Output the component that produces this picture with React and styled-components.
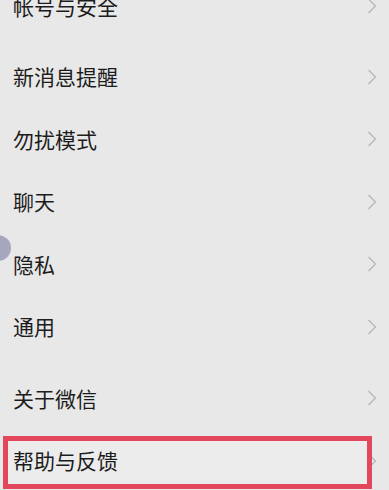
import React from "react";
import styled, { createGlobalStyle } from "styled-components";

const Global = createGlobalStyle`
  html, body { margin: 0; padding: 0; background: #e8e8e8; }
  body { width: 389px; height: 490px; overflow: hidden; }
`;

const Page = styled.div`
  position: relative;
  width: 389px;
  height: 490px;
  overflow: hidden;
  background: #e8e8e8;
  font-family: "Noto Sans CJK SC", "Noto Sans", sans-serif;
`;

const List = styled.div`
  display: flex;
  flex-direction: column;
  margin-top: -25px;
`;

const Group = styled.div`
  display: flex;
  flex-direction: column;
  margin-bottom: ${(p) => p.$gap || 0}px;
`;

const Row = styled.div`
  position: relative;
  height: 62.5px;
  display: flex;
  align-items: center;
  justify-content: space-between;
  padding: 0 12px 0 13px;
`;

const Label = styled.span`
  position: relative;
  z-index: 1;
  font-size: 21px;
  color: #1c1c1c;
  line-height: 1;
`;

const Chevron = styled.svg`
  width: 10px;
  height: 16px;
  flex: none;
`;

const Annotation = styled.div`
  position: absolute;
  left: 3px;
  top: 6px;
  width: 359px;
  height: 43px;
  border: 5px solid #e2475c;
  background: #ececec;
  pointer-events: none;
`;

const Bubble = styled.div`
  position: absolute;
  left: -15px;
  top: 235px;
  width: 26px;
  height: 26px;
  border-radius: 50%;
  background: #a6a6bd;
`;

const Arrow = () => (
  <Chevron viewBox="0 0 10 16">
    <path d="M1.5 1 L8.5 8 L1.5 15" fill="none" stroke="#b3b3ba" strokeWidth="1.2" />
  </Chevron>
);

const Item = ({ label, marked }) => (
  <Row>
    {marked && <Annotation />}
    <Label>{label}</Label>
    <Arrow />
  </Row>
);

export default function App() {
  return (
    <Page>
      <Global />
      <List>
        <Group $gap={8}>
          <Item label="帐号与安全" />
        </Group>
        <Group $gap={9}>
          <Item label="新消息提醒" />
          <Item label="勿扰模式" />
          <Item label="聊天" />
          <Item label="隐私" />
          <Item label="通用" />
        </Group>
        <Group>
          <Item label="关于微信" />
          <Item label="帮助与反馈" marked />
        </Group>
      </List>
      <Bubble />
    </Page>
  );
}
